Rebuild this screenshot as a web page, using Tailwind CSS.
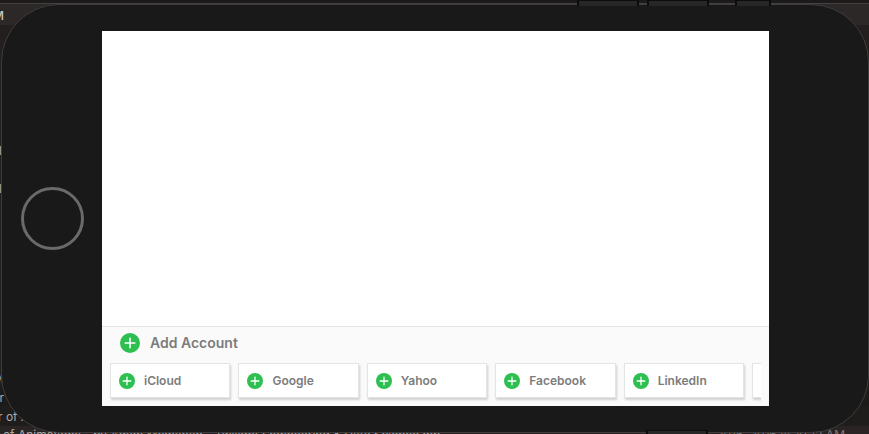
<!DOCTYPE html>
<html lang="en">
<head>
<meta charset="utf-8">
<meta name="viewport" content="width=device-width, initial-scale=1">
<title>Add Account</title>
<script src="https://cdn.jsdelivr.net/npm/@tailwindcss/browser@4"></script>
</head>
<body class="bg-[#231f1f] font-['Inter',sans-serif]">
<svg class="hidden" aria-hidden="true">
  <symbol id="plus" viewBox="0 0 20 20"><circle cx="10" cy="10" r="10" fill="#2dc051"/><path d="M10 5.2v9.6M5.2 10h9.6" stroke="#fff" stroke-width="1.6" stroke-linecap="round"/></symbol>
</svg>
<div class="relative h-screen overflow-hidden pl-px pt-1 pb-px">
  <!-- window behind the device -->
  <div class="absolute inset-0 text-xs text-[#aaa]" aria-hidden="true">
    <div class="absolute inset-x-0 top-0 h-[3px] bg-[#1c1a1a]"></div>
    <div class="absolute inset-x-0 top-[3px] h-px bg-[#454141]"></div>
    <div class="absolute inset-x-0 top-1 h-[21px] bg-[#2d2828]"></div>
    <span class="absolute right-full top-2 -mr-1 font-medium text-[#ccc]">M</span>
    <div class="absolute inset-x-0 bottom-7 h-5 bg-[#1d1a1a]"></div>
    <div class="absolute inset-x-0 bottom-2 h-5 bg-[#1f1c1c]"></div>
    <div class="absolute inset-x-0 bottom-0 h-2 bg-[#2a2425]"></div>
    <span class="absolute right-full top-[143px] -mr-0.5">l</span>
    <span class="absolute right-full top-[181px] -mr-0.5">l</span>
    <span class="absolute right-full top-[371px] -mr-1">M</span>
    <span class="absolute right-full top-[390px] -mr-1">r</span>
    <span class="absolute left-[-2px] top-[409px]">r of A</span>
    <span class="absolute left-[-5px] top-[427px] whitespace-nowrap">r of Animations - by Adam Mcmahan - Twilight Engineering &amp; Data Science.mp</span>
    <span class="absolute right-6 top-[427px] whitespace-nowrap text-[#777]">2016, 2016 at 10:12 AM</span>
  </div>
  <!-- device -->
  <main class="relative flex h-full rounded-[58px] border border-[#3d3d3d] bg-[#191919] pt-[26px] pr-[99px] pb-[26px]">
    <div class="flex w-[100px] shrink-0 items-center justify-center pl-px">
      <button aria-label="Home" class="size-[63px] rounded-full border-3 border-[#6a6a6a]"></button>
    </div>
    <div class="flex min-w-0 flex-1 flex-col bg-white">
      <div class="flex-1"></div>
      <section class="border-t border-[#e6e6e6] bg-[#fafafa] px-2 pb-2">
        <h1 class="flex h-9 items-center gap-2.5 px-2.5 pb-1 text-sm font-semibold text-[#7c7c7c]">
          <svg class="size-5 shrink-0" aria-hidden="true"><use href="#plus"/></svg>Add Account
        </h1>
        <div class="-mb-1 flex gap-2 overflow-hidden pb-1 text-xs font-semibold text-[#7c7c7c]">
          <button class="flex h-[35px] w-[18.5%] shrink-0 items-center gap-[9px] border border-[#e4e4e4] bg-white px-2 shadow-[1px_2px_2px_#d0d0d0]"><svg class="size-4" aria-hidden="true"><use href="#plus"/></svg>iCloud</button>
          <button class="flex h-[35px] w-[18.5%] shrink-0 items-center gap-[9px] border border-[#e4e4e4] bg-white px-2 shadow-[1px_2px_2px_#d0d0d0]"><svg class="size-4" aria-hidden="true"><use href="#plus"/></svg>Google</button>
          <button class="flex h-[35px] w-[18.5%] shrink-0 items-center gap-[9px] border border-[#e4e4e4] bg-white px-2 shadow-[1px_2px_2px_#d0d0d0]"><svg class="size-4" aria-hidden="true"><use href="#plus"/></svg>Yahoo</button>
          <button class="flex h-[35px] w-[18.5%] shrink-0 items-center gap-[9px] border border-[#e4e4e4] bg-white px-2 shadow-[1px_2px_2px_#d0d0d0]"><svg class="size-4" aria-hidden="true"><use href="#plus"/></svg>Facebook</button>
          <button class="flex h-[35px] w-[18.5%] shrink-0 items-center gap-[9px] border border-[#e4e4e4] bg-white px-2 shadow-[1px_2px_2px_#d0d0d0]"><svg class="size-4" aria-hidden="true"><use href="#plus"/></svg>LinkedIn</button>
          <div class="h-[35px] w-[18.5%] shrink-0 border border-[#e4e4e4] bg-white shadow-[1px_2px_2px_#d0d0d0]"></div>
        </div>
      </section>
    </div>
    <!-- side keys on the device edge -->
    <div class="absolute -top-[5px] right-[97px] flex" aria-hidden="true">
      <i class="mr-2 h-1.5 w-[62px] border-x-2 border-t border-[#0c0c0c] bg-[#272727]"></i>
      <i class="mr-[26px] h-1.5 w-[62px] border-x-2 border-t border-[#0c0c0c] bg-[#272727]"></i>
      <i class="h-1.5 w-9 border-x-2 border-t border-[#0c0c0c] bg-[#272727]"></i>
    </div>
    <div class="absolute -bottom-0.5 right-[160px] h-1 w-[62px] border-x-2 border-t border-[#0c0c0c] bg-[#272727]" aria-hidden="true"></div>
  </main>
</div>
</body>
</html>
